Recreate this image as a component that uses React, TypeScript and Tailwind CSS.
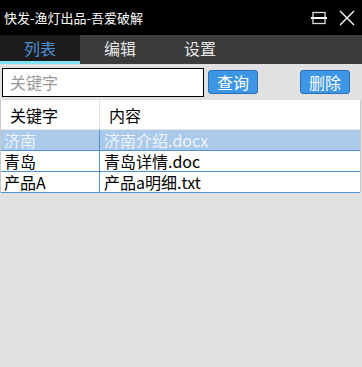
import React from "react";

const font = { fontFamily: '"Noto Sans CJK SC", "Noto Sans", sans-serif' };

export default function App() {
  const rows = [
    { k: "济南", v: "济南介绍.docx", sel: true },
    { k: "青岛", v: "青岛详情.doc", sel: false },
    { k: "产品A", v: "产品a明细.txt", sel: false },
  ];
  return (
    <div className="w-[362px] h-[367px] bg-[#e1e1e1] flex flex-col overflow-hidden" style={font}>
      {/* Title bar */}
      <div className="h-[35px] bg-black flex items-center justify-between pl-[4px] pr-[7px]">
        <span className="text-white text-[13px] leading-none">快发-渔灯出品-吾爱破解</span>
        <div className="flex items-center gap-[12px]">
          <svg width="16" height="14" viewBox="0 0 16 14">
            <rect x="2" y="1.5" width="12" height="11" fill="none" stroke="#ddd" strokeWidth="1.3" />
            <line x1="0" y1="7" x2="16" y2="7" stroke="#fff" strokeWidth="2" />
          </svg>
          <svg width="16" height="16" viewBox="0 0 16 16">
            <path d="M1 1 L15 15 M15 1 L1 15" stroke="#fff" strokeWidth="1.4" />
          </svg>
        </div>
      </div>
      {/* Tabs */}
      <div className="h-[29px] bg-[#3b3b3b] flex">
        <div className="w-[80px] bg-[#1c1c1c] flex flex-col">
          <div className="flex-1 flex items-center justify-center text-[#4f8fd6] text-[16px] leading-[20px]">列表</div>
          <div className="h-[3px] bg-[#7fe3f5]" />
        </div>
        <div className="w-[80px] flex items-center justify-center text-[#e8e8e8] text-[16px] leading-[20px] pb-[3px]">编辑</div>
        <div className="w-[80px] flex items-center justify-center text-[#e8e8e8] text-[16px] leading-[20px] pb-[3px]">设置</div>
      </div>
      {/* Search row */}
      <div className="h-[36px] flex items-center pl-[2px]">
        <div className="w-[202px] h-[29px] bg-white border border-black flex items-center pl-[7px] text-[16px] leading-[20px] text-[#9a9a9a]">
          关键字
        </div>
        <div className="ml-[4px] w-[50px] h-[24px] bg-[#3d95e6] border border-[#2c6fb3] rounded-[3px] flex items-center justify-center text-white text-[16px] leading-[20px]">
          查询
        </div>
        <div className="ml-[42px] w-[50px] h-[24px] bg-[#3d95e6] border border-[#2c6fb3] rounded-[3px] flex items-center justify-center text-white text-[16px] leading-[20px]">
          删除
        </div>
      </div>
      {/* Table */}
      <div className="w-[361px] bg-white border-l border-r border-[#c8c8c8] flex flex-col">
        <div className="h-[30px] flex border-b border-[#e6e6e6]">
          <div className="w-[99px] border-r border-[#e0e0e0] flex items-center pl-[9px] text-[16px] leading-[20px] text-black">关键字</div>
          <div className="flex-1 flex items-center pl-[9px] text-[16px] leading-[20px] text-black">内容</div>
        </div>
        {rows.map((r) => (
          <div
            key={r.k}
            className={
              "h-[21px] flex border-b border-[#4f93cf] " + (r.sel ? "bg-[#abc9e9] text-[#eef4fb]" : "bg-white text-black")
            }
          >
            <div className="w-[99px] border-r border-[#4f93cf] flex items-center pl-[3px] text-[16px] leading-[20px]">{r.k}</div>
            <div className="flex-1 flex items-center pl-[4px] text-[16px] leading-[20px]">{r.v}</div>
          </div>
        ))}
      </div>
    </div>
  );
}
